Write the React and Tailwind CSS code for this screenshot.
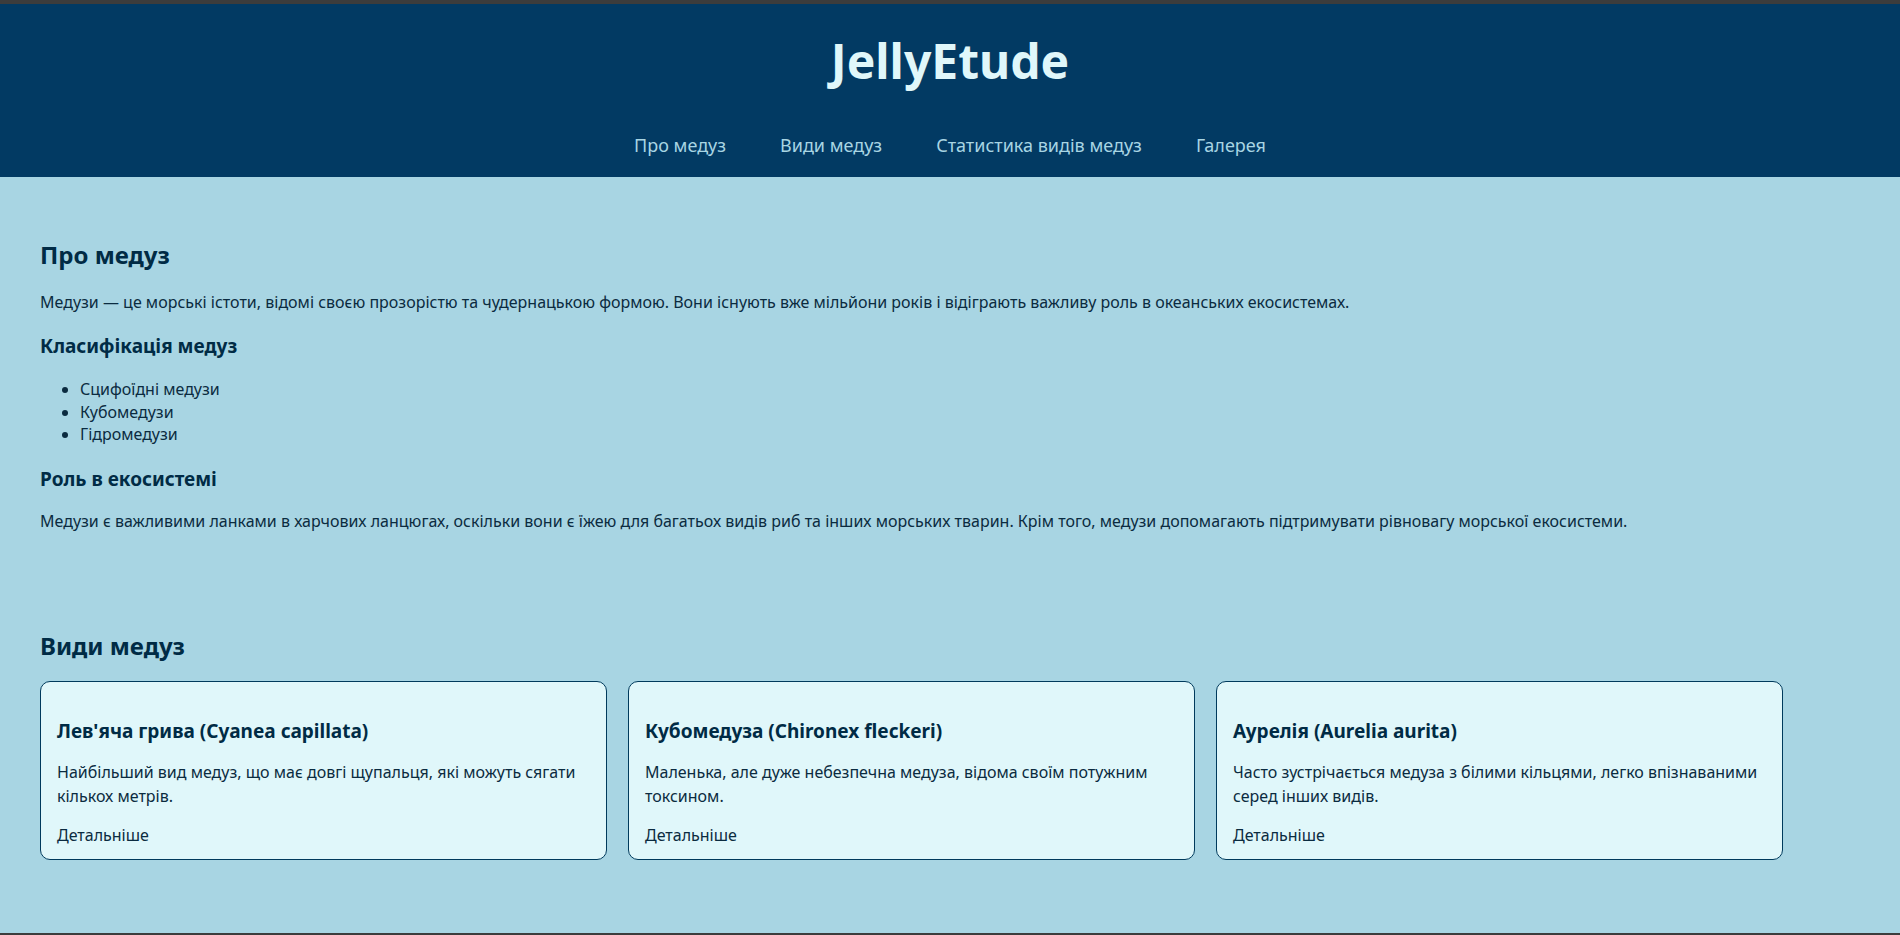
const navLinks = ["Про медуз", "Види медуз", "Статистика видів медуз", "Галерея"];

const species = [
  {
    title: "Лев'яча грива (Cyanea capillata)",
    text: "Найбільший вид медуз, що має довгі щупальця, які можуть сягати кількох метрів.",
  },
  {
    title: "Кубомедуза (Chironex fleckeri)",
    text: "Маленька, але дуже небезпечна медуза, відома своїм потужним токсином.",
  },
  {
    title: "Аурелія (Aurelia aurita)",
    text: "Часто зустрічається медуза з білими кільцями, легко впізнаваними серед інших видів.",
  },
];

const font = { fontFamily: '"Comic Sans MS", "Noto Sans", sans-serif' };

export default function App() {
  return (
    <div className="min-h-[935px] flex flex-col bg-[#a8d5e3] text-[#0b2b40]" style={font}>
      <div className="h-1 bg-[#3c3c3c]" />

      {/* Header */}
      <header className="bg-[#023a63] h-[173px] flex flex-col items-center">
        <h1 className="mt-[29px] text-[48px] leading-[56px] font-bold text-[#e0f7fa]">JellyEtude</h1>
        <nav className="mt-[43px]">
          <ul className="flex">
            {navLinks.map((link) => (
              <li key={link} className="mx-[27px]">
                <a href="#" className="text-[18px] leading-[26px] text-[#a8d5e3]">
                  {link}
                </a>
              </li>
            ))}
          </ul>
        </nav>
      </header>

      <main className="flex-1 px-10 pt-[62px]">
        {/* About */}
        <section>
          <h2 className="text-[24px] leading-[32px] font-bold text-[#002b45]">Про медуз</h2>
          <p className="mt-5 text-[16px] leading-[22px]">
            Медузи — це морські істоти, відомі своєю прозорістю та чудернацькою формою. Вони існують вже мільйони років і відіграють важливу роль в океанських екосистемах.
          </p>
          <h3 className="mt-5 text-[19px] leading-[26px] font-bold text-[#002b45]">Класифікація медуз</h3>
          <ul className="mt-[19px] list-disc pl-10 text-[16px] leading-[22.5px]">
            <li>Сцифоїдні медузи</li>
            <li>Кубомедузи</li>
            <li>Гідромедузи</li>
          </ul>
          <h3 className="mt-[20px] text-[19px] leading-[26px] font-bold text-[#002b45]">Роль в екосистемі</h3>
          <p className="mt-[18px] text-[16px] leading-[22px]">
            Медузи є важливими ланками в харчових ланцюгах, оскільки вони є їжею для багатьох видів риб та інших морських тварин. Крім того, медузи допомагають підтримувати рівновагу морської екосистеми.
          </p>
        </section>

        {/* Species */}
        <section className="mt-[98px]">
          <h2 className="text-[24px] leading-[32px] font-bold text-[#002b45]">Види медуз</h2>
          <div className="mt-[19px] flex gap-[21px]">
            {species.map((s) => (
              <div
                key={s.title}
                className="w-[567px] rounded-[10px] border border-[#003a5c] bg-[#e0f7fa] px-4 pt-4 pb-3"
              >
                <h3 className="mt-5 text-[19px] leading-[26px] font-bold text-[#002b45]">{s.title}</h3>
                <p className="mt-4 text-[16px] leading-[24px]">{s.text}</p>
                <a href="#" className="mt-[15px] block text-[16px] leading-[24px] text-[#0b2b40]">
                  Детальніше
                </a>
              </div>
            ))}
          </div>
        </section>
      </main>

      <div className="h-[2px] bg-[#3c3c3c]" />
    </div>
  );
}
